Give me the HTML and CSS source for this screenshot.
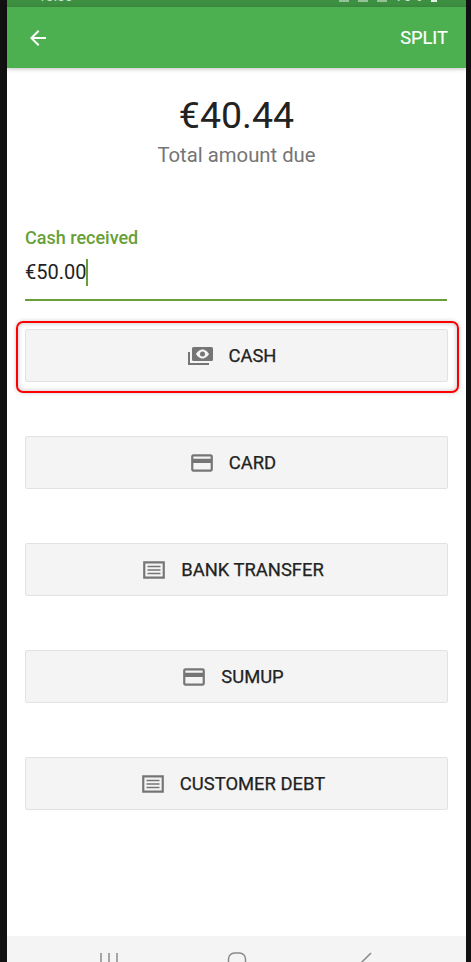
FILE: index.html
```html
<!DOCTYPE html>
<html lang="en">
<head>
<meta charset="utf-8">
<title>Payment</title>
<link rel="stylesheet" href="styles.css">
</head>
<body>
<div class="phone">
  <div class="status">
    <span class="status-text">13:33</span>
    <div class="status-right">
      <i class="status-dot"></i><i class="status-dot"></i><i class="status-dot"></i>
      <span class="status-text">73%</span>
      <i class="status-batt"></i>
    </div>
  </div>
  <header class="toolbar">
    <svg class="back" viewBox="0 0 24 24" width="24" height="24"><path d="M20 11H7.830l5.590-5.590L12 4l-8 8 8 8 1.410-1.410L7.830 13H20z"/></svg>
    <span class="split">SPLIT</span>
  </header>
  <main class="content">
    <section class="due">
      <div class="amount">€40.44</div>
      <div class="due-label">Total amount due</div>
    </section>
    <section class="field">
      <div class="field-label">Cash received</div>
      <div class="field-value"><span>€50.00</span><i class="caret"></i></div>
    </section>
    <div class="methods">
      <div class="method highlighted">
        <svg class="icon-cash" viewBox="0 0 25 18"><path fill-rule="evenodd" d="M5.500 0h18A1.500 1.500 0 0 1 25 1.500v11a1.500 1.500 0 0 1-1.500 1.500h-18A1.500 1.500 0 0 1 4 12.500v-11A1.500 1.500 0 0 1 5.500 0zM14.500 2.500C11.500 2.500 9 5 8 7c1 2 3.500 4.500 6.500 4.500S20 9 21 7c-1-2-3.500-4.500-6.500-4.500z"/><circle cx="14.500" cy="7" r="2.500"/><path d="M0 5h2v11h19v2H0z"/></svg>
        <span>CASH</span>
      </div>
      <div class="method">
        <svg class="icon" viewBox="0 0 24 24"><path d="M20 4H4c-1.110 0-1.990.89-1.990 2L2 18c0 1.110.89 2 2 2h16c1.110 0 2-.89 2-2V6c0-1.110-.89-2-2-2zm0 14H4v-6h16v6zm0-10H4V6h16v2z"/></svg>
        <span>CARD</span>
      </div>
      <div class="method">
        <svg class="icon" viewBox="0 0 24 24"><path d="M2 4v16h20V4H2zm18 14H4V6h16v12zM6 8h12v1.500H6zm0 3.250h12v1.500H6zm0 3.250h12V16H6z"/></svg>
        <span>BANK TRANSFER</span>
      </div>
      <div class="method">
        <svg class="icon" viewBox="0 0 24 24"><path d="M20 4H4c-1.110 0-1.990.89-1.990 2L2 18c0 1.110.89 2 2 2h16c1.110 0 2-.89 2-2V6c0-1.110-.89-2-2-2zm0 14H4v-6h16v6zm0-10H4V6h16v2z"/></svg>
        <span>SUMUP</span>
      </div>
      <div class="method">
        <svg class="icon" viewBox="0 0 24 24"><path d="M2 4v16h20V4H2zm18 14H4V6h16v12zM6 8h12v1.500H6zm0 3.250h12v1.500H6zm0 3.250h12V16H6z"/></svg>
        <span>CUSTOMER DEBT</span>
      </div>
    </div>
  </main>
  <nav class="navbar">
    <svg class="nav-icon" viewBox="0 0 24 24" width="24" height="24"><path d="M4 1v20M12 1v20M20 1v20"/></svg>
    <svg class="nav-icon" viewBox="0 0 24 24" width="24" height="24"><rect x="3.500" y="1" width="17" height="20" rx="6"/></svg>
    <svg class="nav-icon" viewBox="0 0 24 24" width="24" height="24"><path d="M18 1L8 11l10 10"/></svg>
  </nav>
</div>
</body>
</html>
```
FILE: styles.css
```css
html, body {
  margin: 0;
  height: 100%;
  background: #111;
  overflow: hidden;
}
.phone {
  margin: 0 5px 0 7px;
  height: 962px;
  background: #fff;
  display: flex;
  flex-direction: column;
  font-family: Roboto, "Liberation Sans", sans-serif;
  color: #222;
}
.status {
  height: 7px;
  background: #3d8f41;
  overflow: hidden;
  display: flex;
  justify-content: space-between;
  padding: 0 29px 0 31px;
  flex: none;
}
.status-right {
  display: flex;
  gap: 9px;
  align-items: flex-start;
}
.status-dot {
  width: 10px;
  height: 2px;
  background: #cfe3d0;
  opacity: .6;
}
.status-batt {
  width: 6px;
  height: 2px;
  background: #e4f0e4;
}
.status-text {
  font-size: 14px;
  line-height: 13px;
  margin-top: -10px;
  color: #cfe3d0;
}
.toolbar {
  height: 61px;
  flex: none;
  background: #4caf50;
  box-shadow: 0 1px 4px rgba(0, 0, 0, .25);
  display: flex;
  align-items: center;
  justify-content: space-between;
  padding: 0 18px 0 19px;
  position: relative;
  box-sizing: border-box;
}
.back { fill: #fff; }
.split {
  color: #fff;
  font-size: 18.3px;
  font-weight: 400;
  -webkit-text-stroke: .2px #fff;
}
.content {
  flex: 1;
  display: flex;
  flex-direction: column;
}
.due {
  text-align: center;
  padding-top: 26px;
}
.amount {
  font-size: 37.5px;
  line-height: 42px;
}
.due-label {
  font-size: 20.3px;
  line-height: 24px;
  color: #757575;
  margin-top: 7px;
}
.field {
  margin: 60px 19px 0 18px;
  border-bottom: 2px solid #689f38;
  height: 72px;
}
.field-label {
  font-size: 18px;
  font-weight: 500;
  line-height: 21px;
  color: #689f38;
}
.field-value {
  display: flex;
  align-items: center;
  font-size: 20px;
  line-height: 28px;
  margin-top: 10px;
}
.caret {
  width: 2px;
  height: 27px;
  background: #689f38;
}
.methods {
  display: flex;
  flex-direction: column;
  gap: 54px;
  margin: 28px 18px 0;
}
.method {
  height: 53px;
  box-sizing: border-box;
  background: #f4f4f4;
  border: 1px solid #e2e2e2;
  border-radius: 2px;
  display: flex;
  align-items: center;
  justify-content: center;
  gap: 14px;
  padding-right: 8px;
  font-size: 18.4px;
  font-weight: 400;
  -webkit-text-stroke: .25px #222;
  position: relative;
}
.highlighted::after {
  content: "";
  position: absolute;
  top: -9px;
  left: -10px;
  right: -12px;
  bottom: -12px;
  border: 2px solid #f00;
  border-radius: 7px;
  box-shadow: inset 0 0 5px rgba(0, 0, 0, .25), 0 0 4px rgba(0, 0, 0, .2);
}
.icon {
  width: 26px;
  height: 26px;
  fill: #757575;
  flex: none;
}
.icon-cash {
  width: 25px;
  height: 18px;
  fill: #757575;
  flex: none;
  margin-right: 1px;
}
.navbar {
  height: 26px;
  flex: none;
  background: #f4f4f4;
  overflow: hidden;
  display: flex;
  gap: 104px;
  padding: 16px 0 0 90px;
  box-sizing: border-box;
}
.nav-icon {
  fill: none;
  stroke: #8a8a8a;
  stroke-width: 1.500;
  flex: none;
}
```
